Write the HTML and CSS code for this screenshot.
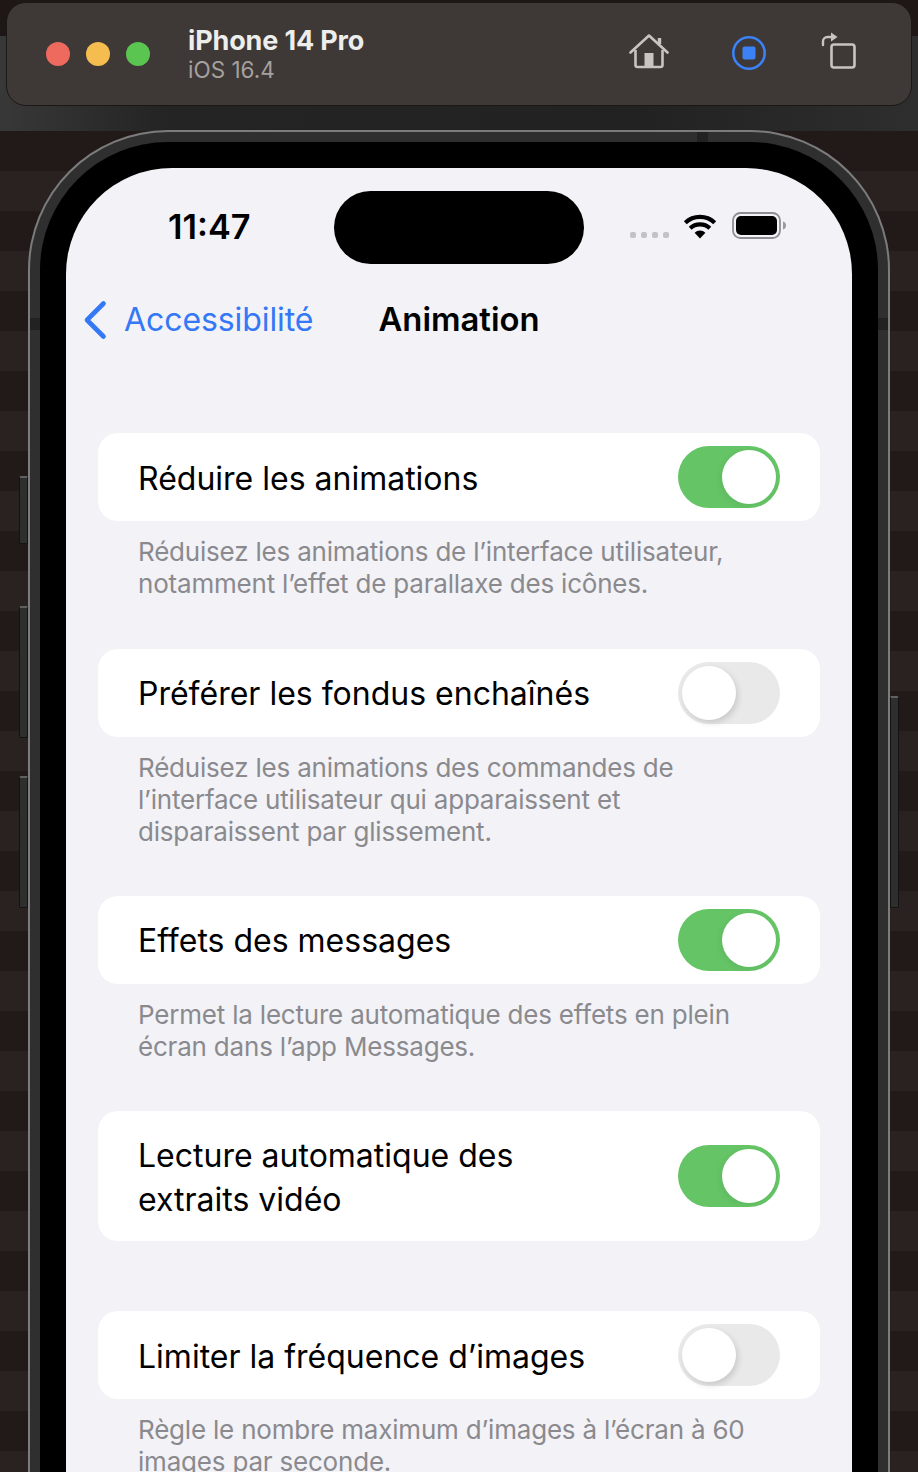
FILE: index.html
```html
<!DOCTYPE html>
<html lang="fr">
<head>
<meta charset="utf-8">
<title>iPhone 14 Pro</title>
<link rel="stylesheet" href="styles.css">
</head>
<body>
<div class="stage">
  <header class="titlebar">
    <div class="toolbar">
      <div class="lights">
        <span class="light red"></span>
        <span class="light yellow"></span>
        <span class="light green"></span>
      </div>
      <div class="device-name">
        <div class="name">iPhone 14 Pro</div>
        <div class="os">iOS 16.4</div>
      </div>
      <div class="tools">
        <svg class="tool-home" width="40" height="36" viewBox="0 0 40 36" fill="none">
          <path d="M1.500 19.500 20 2.500l18.500 17" stroke="#c9c4c1" stroke-width="2.600" stroke-linecap="round" stroke-linejoin="round"/>
          <path d="M6.500 17v15a2 2 0 0 0 2 2h23a2 2 0 0 0 2-2V17" stroke="#c9c4c1" stroke-width="2.600"/>
          <path d="M30.500 11V5" stroke="#c9c4c1" stroke-width="3.400"/>
          <rect x="15.500" y="20" width="9" height="14" fill="#c9c4c1"/>
        </svg>
        <svg class="tool-record" width="34" height="34" viewBox="0 0 34 34" fill="none">
          <circle cx="17" cy="17" r="15.700" stroke="#3b82f6" stroke-width="2.600"/>
          <rect x="10.500" y="10.500" width="13" height="13" rx="2" fill="#3b82f6"/>
        </svg>
        <svg class="tool-rotate" width="36" height="38" viewBox="0 0 36 38" fill="none">
          <rect x="10.500" y="12.500" width="23" height="23" rx="2.500" stroke="#c9c4c1" stroke-width="2.600"/>
          <path d="M2 13V9.500C2 7 4 5 6.500 5H11" stroke="#c9c4c1" stroke-width="2.400" stroke-linecap="round"/>
          <path d="M10 0.500 16.500 5 10 9.500Z" fill="#c9c4c1"/>
        </svg>
      </div>
    </div>
  </header>

  <div class="phone">
    <span class="side-button mute"></span>
    <span class="side-button vol-up"></span>
    <span class="side-button vol-down"></span>
    <span class="side-button power"></span>
    <div class="bezel">
      <span class="antenna antenna-top"></span>
      <span class="antenna antenna-left"></span>
      <span class="antenna antenna-right"></span>
      <main class="screen">
        <div class="statusbar">
          <span class="time">11:47</span>
          <span class="island"></span>
          <div class="status-icons">
            <span class="cell"><i></i><i></i><i></i><i></i></span>
            <svg class="wifi" width="34" height="26" viewBox="0 0 34 26">
              <path d="M17 25.500 11.600 19.700a8 8 0 0 1 10.800 0Z" fill="#000"/>
              <path d="M7.200 15.200a14.300 14.300 0 0 1 19.600 0" fill="none" stroke="#000" stroke-width="4.200"/>
              <path d="M2.300 9.700a21.500 21.500 0 0 1 29.400 0" fill="none" stroke="#000" stroke-width="4.200"/>
            </svg>
            <svg class="battery" width="55" height="27" viewBox="0 0 55 27">
              <rect x="1" y="1" width="47" height="25" rx="7.500" fill="none" stroke="#8e8e92" stroke-width="1.800"/>
              <rect x="4" y="4" width="41" height="19" rx="5" fill="#000"/>
              <path d="M51 9.500c2 .5 3 2 3 4s-1 3.500-3 4Z" fill="#9a9a9e"/>
            </svg>
          </div>
        </div>

        <nav class="navbar">
          <a class="back">
            <svg width="24" height="40" viewBox="0 0 24 40" fill="none">
              <path d="M20.500 3.500 4 20l16.500 16.500" stroke="#3478f6" stroke-width="4.600" stroke-linecap="round" stroke-linejoin="round"/>
            </svg>
            <span>Accessibilité</span>
          </a>
          <h1 class="title">Animation</h1>
        </nav>

        <section class="group">
          <div class="card">
            <span class="label">Réduire les animations</span>
            <span class="switch on"><span class="knob"></span></span>
          </div>
          <p class="note">Réduisez les animations de l’interface utilisateur, notamment l’effet de parallaxe des icônes.</p>
        </section>

        <section class="group">
          <div class="card">
            <span class="label">Préférer les fondus enchaînés</span>
            <span class="switch"><span class="knob"></span></span>
          </div>
          <p class="note">Réduisez les animations des commandes de l’interface utilisateur qui apparaissent et disparaissent par glissement.</p>
        </section>

        <section class="group">
          <div class="card">
            <span class="label">Effets des messages</span>
            <span class="switch on"><span class="knob"></span></span>
          </div>
          <p class="note">Permet la lecture automatique des effets en plein écran dans l’app Messages.</p>
        </section>

        <section class="group group-solo">
          <div class="card card-tall">
            <span class="label">Lecture automatique des<br>extraits vidéo</span>
            <span class="switch on"><span class="knob"></span></span>
          </div>
        </section>

        <section class="group">
          <div class="card">
            <span class="label">Limiter la fréquence d’images</span>
            <span class="switch"><span class="knob"></span></span>
          </div>
          <p class="note">Règle le nombre maximum d’images à l’écran à 60 images par seconde.</p>
        </section>
      </main>
    </div>
  </div>
</div>
</body>
</html>
```

FILE: styles.css
```css
* { box-sizing: border-box; }

html, body {
  margin: 0;
  height: 100%;
  overflow: hidden;
  background: #231a18;
}

.stage {
  height: 1472px;
  overflow: hidden;
  font-family: Inter, "Noto Sans", sans-serif;
  background: repeating-linear-gradient(180deg, #2a2220 0 40px, #221a18 40px 80px) 0 11px;
}

.titlebar {
  height: 131px;
  padding: 2px 6px 0;
  background: linear-gradient(180deg, #1e1715 0 36px, transparent 36px),
    linear-gradient(90deg, #383838 0, #242424 18%, #222 70%, #2e2e2e 100%);
}

.toolbar {
  height: 104px;
  display: flex;
  align-items: center;
  padding: 0 54px 0 39px;
  background: #3e3836;
  border: 1px solid #1c1817;
  border-radius: 20px;
}

.lights { display: flex; gap: 16px; }
.light { width: 24px; height: 24px; border-radius: 50%; }
.red { background: #ee6a5f; }
.yellow { background: #f5bd4f; }
.green { background: #5bc551; }

.device-name { margin-left: 38px; }
.name { font-size: 27px; line-height: 30px; font-weight: 700; color: #ededec; letter-spacing: -0.15px; }
.os { margin-top: 1px; font-size: 22.500px; line-height: 26px; color: #a5a19f; }

.tools { margin-left: auto; align-self: flex-start; display: flex; align-items: flex-start; }
.tool-home { margin-top: 30px; }
.tool-record { margin: 33px 0 0 63px; }
.tool-rotate { margin: 29px 0 0 55px; }

.phone {
  position: relative;
  margin: -1px 28px 0;
  width: 862px;
}

.bezel {
  position: relative;
  height: 1500px;
  padding: 26px 26px 0;
  background: #000;
  border: 12px solid #2f2f2f;
  border-bottom: 0;
  border-radius: 140px 140px 0 0;
}

.bezel::before {
  content: "";
  position: absolute;
  inset: -12px -12px 0;
  border: 2px solid #7c7c7c;
  border-bottom: 0;
  border-radius: 140px 140px 0 0;
  pointer-events: none;
}

.antenna { position: absolute; background: #222; }
.antenna-top { top: -10px; left: 657px; width: 11px; height: 10px; }
.antenna-left { top: 176px; left: -10px; width: 10px; height: 12px; }
.antenna-right { top: 176px; right: -10px; width: 10px; height: 12px; }

.side-button {
  position: absolute;
  width: 9px;
  background: #2e2e2e;
  border: 1px solid #151212;
  border-top: 2px solid #606060;
  border-radius: 2px 0 0 2px;
}
.mute { left: -9px; top: 346px; height: 68px; }
.vol-up { left: -9px; top: 476px; height: 132px; }
.vol-down { left: -9px; top: 646px; height: 132px; }
.power { right: -9px; top: 566px; height: 212px; transform: scaleX(-1); }

.screen {
  height: 1400px;
  background: #f2f2f7;
  border-radius: 106px 106px 0 0;
  padding: 0 32px;
  color: #000;
}

.statusbar {
  position: relative;
  height: 96px;
  margin: 0 -32px;
}
.time {
  position: absolute;
  left: 102px;
  top: 39px;
  font-size: 34.300px;
  line-height: 40px;
  font-weight: 600;
}
.island {
  position: absolute;
  left: 268px;
  top: 23px;
  width: 250px;
  height: 73px;
  background: #000;
  border-radius: 37px;
}
.status-icons {
  position: absolute;
  left: 564px;
  top: 44px;
  display: flex;
  align-items: flex-start;
}
.cell { display: flex; gap: 5px; margin-top: 20px; }
.cell i { width: 6px; height: 6px; border-radius: 2px; background: #c3c3c6; }
.wifi { margin-left: 14px; margin-top: 1px; }
.battery { margin-left: 15px; }

.navbar {
  position: relative;
  height: 48px;
  margin: 32px -32px 0;
  display: flex;
  align-items: center;
  justify-content: center;
}
.back {
  position: absolute;
  left: 17px;
  top: 4px;
  display: flex;
  align-items: center;
  gap: 17px;
  color: #3478f6;
  font-size: 32px;
  line-height: 40px;
  letter-spacing: -0.08px;
}
.title {
  margin: -2px 0 0;
  font-size: 32.800px;
  line-height: 48px;
  font-weight: 600;
}

.group { margin-bottom: 47.400px; }
.navbar + .group { margin-top: 89.200px; }
.group-solo { margin-bottom: 70px; }

.card {
  height: 88px;
  padding: 0 40px;
  background: #fff;
  border-radius: 20px;
  display: flex;
  align-items: center;
  justify-content: space-between;
}
.card-tall { height: 130px; }

.label {
  padding-top: 3px;
  font-size: 32px;
  line-height: 44px;
}

.switch {
  flex: none;
  position: relative;
  display: block;
  width: 102px;
  height: 62px;
  border-radius: 31px;
  background: #e9e9ea;
}
.switch.on { background: #65c466; }
.knob {
  position: absolute;
  left: 4px;
  top: 4px;
  width: 54px;
  height: 54px;
  border-radius: 50%;
  background: #fff;
  box-shadow: 2px 3px 6px rgba(0, 0, 0, 0.14);
}
.switch.on .knob { left: 44px; box-shadow: -2px 2px 6px rgba(0, 0, 0, 0.06); }

.note {
  margin: 15px 0 0;
  padding: 0 40px 1px;
  font-size: 26px;
  line-height: 32px;
  letter-spacing: -0.2px;
  color: #8a8a8e;
}
```
